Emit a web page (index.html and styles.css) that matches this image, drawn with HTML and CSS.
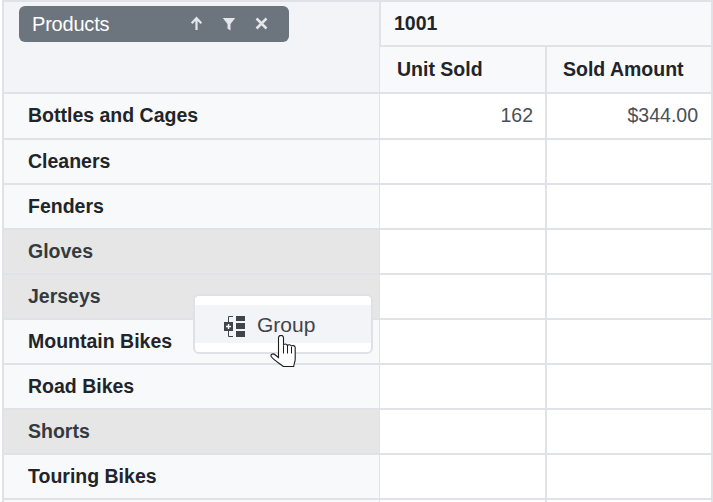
FILE: index.html
```html
<!DOCTYPE html>
<html lang="en">
<head>
<meta charset="utf-8">
<title>Pivot grid</title>
<link rel="stylesheet" href="styles.css">
</head>
<body>
<div class="pivot">
  <div class="corner">
    <div class="chip">
      <span class="chip-label">Products</span>
      <span class="chip-icons">
        <svg width="13" height="15" viewBox="0 0 13 15"><path d="M6.500 14V2.800M1.700 7.200 6.500 2.200l4.800 5" fill="none" stroke="#e4e6e9" stroke-width="2.200"/></svg>
        <svg width="14" height="14" viewBox="0 0 14 14"><path d="M.8 1h12.400L8.500 7v6.500L5.500 11.500V7z" fill="#e4e6e9"/></svg>
        <svg width="13" height="13" viewBox="0 0 13 13"><path d="M1.500 1.500l10 10M11.500 1.500l-10 10" fill="none" stroke="#e4e6e9" stroke-width="2.500"/></svg>
      </span>
    </div>
  </div>
  <div class="head year">1001</div>
  <div class="head measure">Unit Sold</div>
  <div class="head measure amount">Sold Amount</div>

  <div class="rowhead first">Bottles and Cages</div>
  <div class="cell units">162</div>
  <div class="cell">$344.00</div>

  <div class="rowhead">Cleaners</div><div class="cell"></div><div class="cell"></div>
  <div class="rowhead">Fenders</div><div class="cell"></div><div class="cell"></div>
  <div class="rowhead picked">Gloves</div><div class="cell"></div><div class="cell"></div>
  <div class="rowhead picked">Jerseys</div><div class="cell"></div><div class="cell"></div>
  <div class="rowhead">Mountain Bikes</div><div class="cell"></div><div class="cell"></div>
  <div class="rowhead">Road Bikes</div><div class="cell"></div><div class="cell"></div>
  <div class="rowhead picked">Shorts</div><div class="cell"></div><div class="cell"></div>
  <div class="rowhead">Touring Bikes</div><div class="cell"></div><div class="cell"></div>
  <div class="rowhead stub"></div><div class="cell stub"></div><div class="cell stub"></div>

  <div class="menu">
    <div class="menu-item">
      <svg class="menu-icon" width="23" height="23" viewBox="0 0 23 23">
        <path d="M10 1.500H5.500V7M5.500 16v5.500H10" fill="none" stroke="#3f454c" stroke-width="1"/>
        <rect x="1" y="7" width="9" height="9" fill="#3f454c"/>
        <path d="M5.500 9v5M3 11.500h5" stroke="#fff" stroke-width="1.400"/>
        <rect x="13" y="1" width="9" height="5" fill="#3f454c"/>
        <rect x="13" y="8" width="9" height="6" fill="#3f454c"/>
        <rect x="13" y="16" width="9" height="6" fill="#3f454c"/>
      </svg>
      <span class="menu-label">Group</span>
    </div>
  </div>

  <svg class="hand" width="27" height="33" viewBox="0 0 27 33">
    <path d="M8.500 3c0-3.500 5-3.500 5 0v7.500c0-2 4-2 4 .5 0-1.800 4-1.800 4 .6 0-1.500 3.700-1.500 3.700 1V24c0 3-1 4-1.500 7.500H13.500C9 28 4 25.500 1.200 21.500c-1-2 1.500-3.500 3.500-2l3.800 3z" fill="#fff" stroke="#1c1c1c" stroke-width="1.100"/>
    <path d="M13.500 10.500v8M17.500 11v7.500M21.500 12v6.500" fill="none" stroke="#1c1c1c" stroke-width="1"/>
  </svg>
</div>
</body>
</html>
```

FILE: styles.css
```css
* { box-sizing: border-box; }

html, body {
  margin: 0;
  height: 502px;
  overflow: hidden;
  background: #fff;
}

.pivot {
  position: relative;
  display: grid;
  grid-template-columns: 376px 167px 166px;
  grid-template-rows: 45px 47px 46px repeat(8, 45px) 2px;
  margin-left: 4px;
  width: 709px;
  border-top: 2px solid #e0e2e8;
  box-shadow: -2px 0 0 #e0e2e8;
  font: 19.500px/1.2 "Liberation Sans", Arial, sans-serif;
  color: #212529;
}

.corner {
  grid-column: 1;
  grid-row: 1 / span 2;
  background: #f3f4f7;
  border-right: 1px solid #e0e2e8;
  border-bottom: 2px solid #e0e2e8;
  padding: 4px 0 0 15px;
}

.chip {
  display: flex;
  align-items: center;
  justify-content: space-between;
  width: 270px;
  height: 36px;
  padding: 0 21px 1px 13px;
  background: #6c757d;
  border-radius: 6px;
  color: #fff;
}

.chip-label {
  font-size: 20px;
  letter-spacing: -0.2px;
}

.chip-icons {
  display: flex;
  align-items: center;
  gap: 19px;
}

.head {
  display: flex;
  align-items: center;
  background: #f8f9fb;
  font-weight: 700;
  border-right: 2px solid #e0e2e8;
  border-bottom: 2px solid #e0e2e8;
}

.year {
  grid-column: 2 / span 2;
  padding-left: 13px;
  border-left: 1px solid #e0e2e8;
}

.measure {
  padding-left: 17px;
}

.amount {
  padding-left: 16px;
}

.rowhead {
  display: flex;
  align-items: center;
  padding-left: 24px;
  background: #f8f9fb;
  font-weight: 700;
  border-right: 1px solid #e0e2e8;
  border-bottom: 2px solid #e0e2e8;
}

.rowhead.first {
  padding-bottom: 1px;
}

.rowhead.picked {
  background: #e6e6e6;
  color: #343a40;
}

.cell {
  display: flex;
  align-items: center;
  justify-content: flex-end;
  padding: 0 13px 1px 0;
  background: #fff;
  color: #495057;
  border-right: 2px solid #e0e2e8;
  border-bottom: 2px solid #e0e2e8;
}

.cell.units {
  padding-right: 12px;
}

.stub {
  padding: 0;
  border-bottom: 0;
}

.menu {
  position: absolute;
  left: 189px;
  top: 292px;
  width: 180px;
  height: 60px;
  padding: 9px 0;
  background: #fff;
  border: 2px solid #dfe1e6;
  border-radius: 6px;
}

.menu-item {
  display: flex;
  align-items: center;
  gap: 11px;
  height: 38px;
  padding-left: 28px;
  background: #f3f4f7;
  color: #3f454c;
  font-size: 21px;
}

.menu-icon {
  margin-top: 5px;
}

.menu-label {
  padding-top: 2px;
}

.hand {
  position: absolute;
  left: 266px;
  top: 333px;
}
```
